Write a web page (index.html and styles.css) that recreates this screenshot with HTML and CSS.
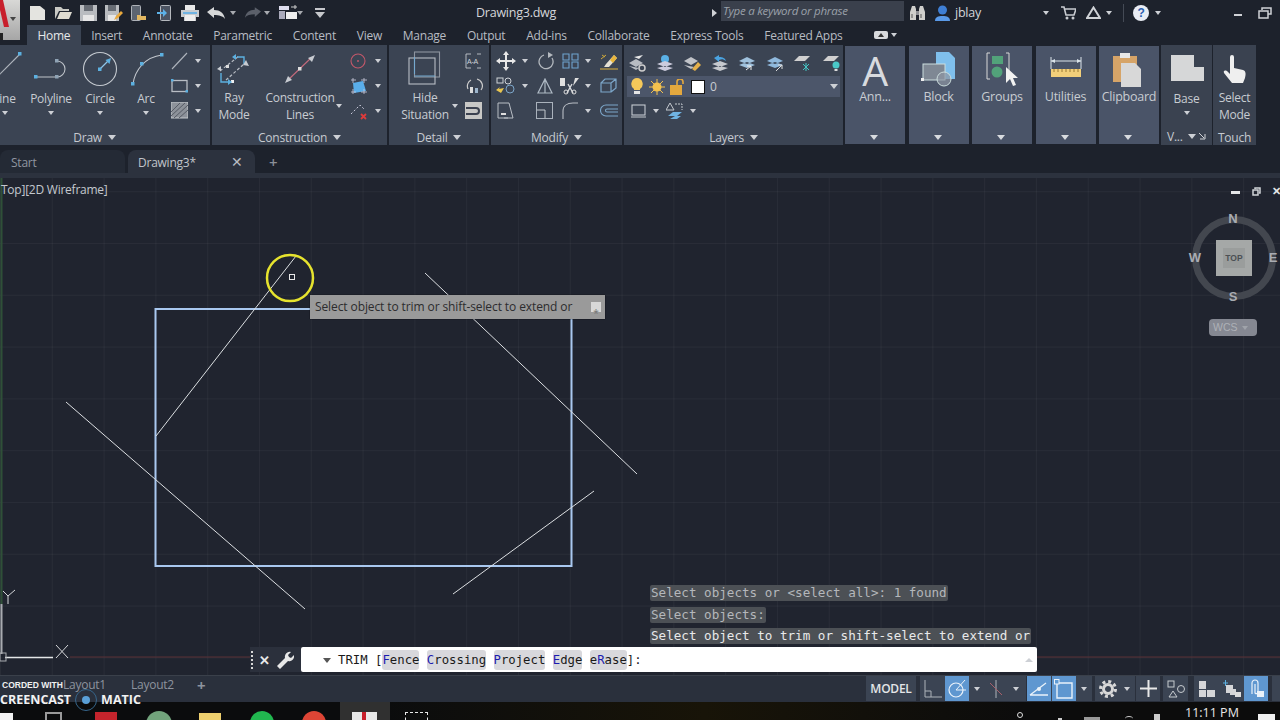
FILE: index.html
```html
<!DOCTYPE html>
<html lang="en">
<head>
<meta charset="utf-8">
<title>Drawing3.dwg</title>
<link rel="stylesheet" href="styles.css">
</head>
<body>
<header class="top">
  <div class="logo">
    <svg width="20" height="40" viewBox="0 0 20 40"><path d="M0 0h3l6 27H4L0 10z" fill="#c8202c"/><path d="M0 33h3v7H0z" fill="#222"/></svg>
    <i class="caret dark"></i>
  </div>
  <div class="top-main">
    <div class="titlebar">
      <div class="qat">
        <svg class="q" width="17" height="14" viewBox="0 0 17 14"><path d="M1 0h10l5 4v10H1z" fill="#e4e4e0"/></svg>
        <svg class="q" width="18" height="14" viewBox="0 0 18 14"><path d="M1 13V1h6l2 2h6v2H5z" fill="#c9c9c4"/><path d="M3 13l3-7h12l-3 7z" fill="#dedbd0"/></svg>
        <svg class="q" width="17" height="16" viewBox="0 0 17 16"><path d="M0 0h17v16H0z" fill="#b9bcc0"/><path d="M4 0h9v6H4z" fill="#676c74"/><path d="M3 10h11v6H3z" fill="#e6e6e6"/></svg>
        <svg class="q" width="18" height="16" viewBox="0 0 18 16"><path d="M0 0h14v16H0z" fill="#b9bcc0"/><path d="M3 0h8v6H3z" fill="#676c74"/><path d="M3 10h8v6H3z" fill="#e6e6e6"/><path d="M9 15l2-4 5-5 2 2-5 5z" fill="#e8a83c"/></svg>
        <svg class="q" width="16" height="16" viewBox="0 0 16 16"><rect x="0.5" y="0.5" width="9" height="15" rx="1" fill="#5c6470" stroke="#aeb2b8"/><path d="M6 10h3l1 1h5v4H6z" fill="#e2b760"/></svg>
        <svg class="q g1" width="14" height="16" viewBox="0 0 14 16"><rect x="3.5" y="0.5" width="10" height="15" rx="1" fill="#4c5462" stroke="#b5b9be"/><path d="M0 7h6V4l4 4-4 4V9H0z" fill="#5db2e8"/></svg>
        <svg class="q" width="18" height="16" viewBox="0 0 18 16"><path d="M4 0h10v5H4z" fill="#e8e8e8"/><path d="M0 5h18v7h-3v4H3v-4H0z" fill="#c8ccd0"/><path d="M4 10h10v6H4z" fill="#eee"/><path d="M2 7h14v2H2z" fill="#6fb3e2"/></svg>
        <svg class="q" width="18" height="12" viewBox="0 0 18 12"><path d="M0 5l7-5v3c6 0 10 3 11 9-2-3-6-4-11-4v3z" fill="#d5d7d8"/></svg>
        <i class="caret qc"></i>
        <svg class="q g2" width="16" height="11" viewBox="0 0 18 12"><path d="M18 5l-7-5v3C5 3 1 6 0 12c2-3 6-4 11-4v3z" fill="#5b606a"/></svg>
        <i class="caret qc"></i>
        <svg class="q g3" width="18" height="15" viewBox="0 0 18 15"><path d="M0 1h10v4H0z" fill="#dde"/><path d="M0 6h6v8H0z" fill="#aab"/><path d="M7 7h11v7H7z" fill="#eee"/><path d="M12 2h6M16 0v4" stroke="#ccc"/></svg>
        <i class="caret qc"></i>
        <svg class="q g4" width="10" height="10" viewBox="0 0 10 10"><path d="M0 0h10v2H0zM0 4h10L5 10z" fill="#c6c8cc"/></svg>
      </div>
      <div class="doc-title">Drawing3.dwg</div>
      <i class="tri-right"></i>
      <div class="search">Type a keyword or phrase</div>
      <svg class="binoc" width="15" height="14" viewBox="0 0 15 14"><path d="M2 0h3l1 3v11H0V6zM10 0h3l2 6v8H9V3z" fill="#cfcfcc"/><path d="M6 5h3v4H6z" fill="#8f9196"/><path d="M2 8v4M11 8v4" stroke="#555"/></svg>
      <svg class="user" width="15" height="16" viewBox="0 0 15 16"><circle cx="7.500" cy="5" r="4.500" fill="#3f7fd4"/><path d="M0 16c0-4 3-5 7.500-5s7.500 1 7.500 5z" fill="#5a9ae8"/></svg>
      <div class="uname">jblay</div>
      <i class="caret u1"></i>
      <svg class="cart" width="15" height="14" viewBox="0 0 15 14"><path d="M0 1h3l2 8h8l2-6H4" fill="none" stroke="#c8cbd0" stroke-width="1.600"/><circle cx="6" cy="12" r="1.500" fill="#c8cbd0"/><circle cx="12" cy="12" r="1.500" fill="#c8cbd0"/></svg>
      <svg class="delta" width="15" height="13" viewBox="0 0 15 13"><path d="M7.500 1.500L14 12H1z" fill="none" stroke="#cfd2d6" stroke-width="2"/></svg>
      <i class="caret u2"></i>
      <span class="vsep"></span>
      <div class="help">?</div>
      <i class="caret u3"></i>
      <span class="win-min"></span>
      <svg class="win-max" width="14" height="12" viewBox="0 0 14 12"><path d="M4 3V1h9v6h-3M1 4h9v7H1z" fill="none" stroke="#cfd2d6" stroke-width="1.500"/></svg>
    </div>
    <nav class="tabs">
      <span class="tab active">Home</span><span class="tab">Insert</span><span class="tab">Annotate</span><span class="tab">Parametric</span><span class="tab">Content</span><span class="tab">View</span><span class="tab">Manage</span><span class="tab">Output</span><span class="tab">Add-ins</span><span class="tab">Collaborate</span><span class="tab">Express Tools</span><span class="tab">Featured Apps</span>
      <span class="tab-pill"><i class="caret up"></i></span><i class="caret pillc"></i>
    </nav>
  </div>
</header>

<section class="ribbon">
  <div class="panel p-draw">
    <div class="body">
      <div class="tool w48"><svg width="48" height="44" viewBox="0 0 48 44"><path d="M16 34L41 9" stroke="#aeb4bc" stroke-width="1.100"/><rect x="39" y="7" width="3.500" height="3.500" fill="#5cb0e0"/></svg><span class="lbl line">Line</span><i class="caret line-c"></i></div>
      <div class="tool w48"><svg width="48" height="44" viewBox="0 0 48 44"><path d="M9 32H30A8 8 0 0 0 30 16" fill="none" stroke="#bfc4ca" stroke-width="1.100"/><rect x="7" y="30" width="3.500" height="3.500" fill="#5cb0e0"/><rect x="28" y="14" width="3.500" height="3.500" fill="#8fa3b5"/><rect x="28" y="30" width="3.500" height="3.500" fill="#8fa3b5"/></svg><span class="lbl">Polyline</span><i class="caret"></i></div>
      <div class="tool w50"><svg width="50" height="44" viewBox="0 0 50 44"><circle cx="25" cy="24" r="16.500" fill="none" stroke="#c4c9cf" stroke-width="1.100"/><path d="M25 24l9-9" stroke="#8fc4e8" stroke-width="1.200"/><rect x="23" y="22.500" width="3.500" height="3.500" fill="#5cb0e0"/><path d="M36 13l-1.500 6-4-4z" fill="#5cb0e0"/></svg><span class="lbl">Circle</span><i class="caret"></i></div>
      <div class="tool w42"><svg width="42" height="44" viewBox="0 0 42 44"><path d="M8 39C10 25 20 12 37 10" fill="none" stroke="#c4c9cf" stroke-width="1.100"/><rect x="6" y="37" width="3.500" height="3.500" fill="#5cb0e0"/><rect x="15" y="17" width="3.500" height="3.500" fill="#5cb0e0"/><rect x="35" y="8" width="3.500" height="3.500" fill="#5cb0e0"/></svg><span class="lbl">Arc</span><i class="caret"></i></div>
      <div class="smalls s-draw">
        <div class="srow"><svg width="17" height="18" viewBox="0 0 17 18"><path d="M1 17L16 1" stroke="#aeb4bc" stroke-width="1.100"/></svg><i class="caret"></i></div>
        <div class="srow"><svg width="17" height="14" viewBox="0 0 17 14"><rect x="1" y="1.500" width="15" height="11" fill="none" stroke="#b8bdc4" stroke-width="1.300"/><rect x="0" y="0" width="2.500" height="2.500" fill="#5cb0e0"/><rect x="14.500" y="11" width="2.500" height="2.500" fill="#5cb0e0"/></svg><i class="caret"></i></div>
        <div class="srow"><svg width="17" height="17" viewBox="0 0 17 17"><rect width="17" height="16" fill="#8d929a" stroke="#c4c8cc"/><path d="M0 10L9 1M0 14L14 1M3 16L17 3M8 16l9-8" stroke="#565b65"/></svg><i class="caret"></i></div>
      </div>
    </div>
    <div class="ptitle">Draw <i class="caret big"></i></div>
  </div>

  <div class="panel p-cons">
    <div class="body">
      <div class="tool w44"><svg width="44" height="44" viewBox="0 0 44 44"><path d="M8 26L27 11M14 35L32 19" fill="none" stroke="#b9bec5" stroke-dasharray="3 2" stroke-width="1.200"/><path d="M25 12h7v7M9 28v9h7" fill="none" stroke="#5cb0e0" stroke-width="1.400"/><rect x="19" y="35" width="3" height="3" fill="#eee"/><rect x="14" y="20" width="3" height="3" fill="#ddd"/><path d="M24 9l-4 3 4 3zM16 34l4 3-4 3z" fill="#5cb0e0"/><path d="M5 24l4-3v5zM34 15l3 6-6-1z" fill="#c8ccd2"/></svg><span class="lbl two">Ray<br>Mode</span></div>
      <div class="tool w74"><svg width="74" height="44" viewBox="0 0 74 44"><path d="M25 35L48 13" stroke="#c36a7c" stroke-width="1.100"/><rect x="35" y="22" width="3.500" height="3.500" fill="#ddd"/><path d="M52 10l-3 7-4-4zM22 38l3-7 4 4z" fill="#c8ccd2"/></svg><span class="lbl two">Construction<br>Lines</span></div>
      <i class="caret c-lines"></i>
      <div class="smalls s-cons">
        <div class="srow"><svg width="18" height="18" viewBox="0 0 18 18"><circle cx="8" cy="9" r="7" fill="none" stroke="#c2586a" stroke-width="1.100"/><circle cx="8" cy="9" r="1" fill="#c2586a"/></svg><i class="caret"></i></div>
        <div class="srow"><svg width="18" height="18" viewBox="0 0 18 18"><path d="M3 6l10-2 3 10-12 2z" fill="#5aaeea"/><path d="M1 3h5M3 1v5M11 3h6M14 1v5M1 15h5M3 12v5M11 15h6M14 12v5" stroke="#ccd" stroke-width=".8"/></svg><i class="caret"></i></div>
        <div class="srow"><svg width="18" height="18" viewBox="0 0 18 18"><path d="M1 12L10 3l5 5" fill="none" stroke="#ccd" stroke-dasharray="2 2"/><path d="M11 12l5 5M16 12l-5 5" stroke="#dd3b3b" stroke-width="1.800"/></svg><i class="caret"></i></div>
      </div>
    </div>
    <div class="ptitle">Construction <i class="caret big"></i></div>
  </div>

  <div class="panel p-detail">
    <div class="body">
      <div class="tool w60"><svg width="36" height="44" viewBox="0 0 36 44"><rect x="7.500" y="7" width="25" height="25" fill="none" stroke="#8e959f" stroke-width="1.100"/><rect x="2" y="13" width="26" height="26" fill="none" stroke="#b9bec5" stroke-width="1.100"/><path d="M7.500 30V13M7.500 32H28" stroke="#75a9cf" stroke-width="1.100" transform="translate(0 -1)"/></svg><span class="lbl two">Hide<br>Situation</span></div>
      <i class="caret c-hide"></i>
      <div class="smalls s-detail">
        <div class="srow"><svg width="18" height="18" viewBox="0 0 18 18"><path d="M1 2h5M1 2v14h5M12 2h4M12 16h4" fill="none" stroke="#c2c6cc" stroke-width=".9"/><text class="ic-t" x="2" y="12">A-A</text></svg></div>
        <div class="srow"><svg width="18" height="18" viewBox="0 0 18 18"><path d="M3 12a7 7 0 0 1 3-9M12 2a7 7 0 0 1 4 11" fill="none" stroke="#ccc" stroke-width="1.200"/><rect x="5" y="10" width="3" height="6" fill="#ddd"/><rect x="10" y="11" width="3" height="5" fill="#9db5cc"/></svg></div>
        <div class="srow"><svg width="18" height="17" viewBox="0 0 18 17"><rect width="17" height="17" fill="#c8c8c6"/><path d="M1 6h10a3 3 0 0 1 0 6H1" fill="none" stroke="#3c4250" stroke-width="2"/></svg></div>
      </div>
    </div>
    <div class="ptitle">Detail <i class="caret big"></i></div>
  </div>

  <div class="panel p-modify">
    <div class="body">
      <div class="mgrid">
        <svg width="20" height="20" viewBox="0 0 20 20"><path d="M10 0l3 4h-2v5h5V7l4 3-4 3v-2h-5v5h2l-3 4-3-4h2v-5H4v2l-4-3 4-3v2h5V4H7z" fill="#e8e8e8"/></svg><i class="caret"></i>
        <svg width="18" height="18" viewBox="0 0 18 18"><path d="M8 3a7 7 0 1 0 8 3" fill="none" stroke="#b4b9bf" stroke-width="1.300"/><path d="M8 0l5 3-5 3z" fill="#b4b9bf" transform="translate(4 0)"/></svg>
        <svg width="17" height="16" viewBox="0 0 17 16"><path d="M1 1h6v6H1zM10 1h6v6h-6zM1 9h6v6H1zM10 9h6v6h-6z" fill="none" stroke="#6fa3cf" stroke-width="1.100"/></svg><i class="caret"></i>
        <svg width="18" height="18" viewBox="0 0 18 18"><path d="M0 17h18" stroke="#e0b13d"/><path d="M6 12l8-9 3 3-8 9H4z" fill="#e4e0d4"/><path d="M10 8l4-5 3 3-4 5z" fill="#e8b53b"/><path d="M1 7l5-4M2 3l3 2" stroke="#d0a93a"/></svg>
        <svg width="20" height="17" viewBox="0 0 20 17"><rect x="1" y="1" width="6" height="5" fill="none" stroke="#cfd3d8"/><circle cx="12" cy="4" r="3" fill="none" stroke="#cfd3d8"/><path d="M0 13l4-3-1 2 5-1-3 5z" fill="#e8c550"/><circle cx="14" cy="12" r="4" fill="none" stroke="#7ca6c9"/></svg><i class="caret"></i>
        <svg width="16" height="16" viewBox="0 0 16 16"><path d="M8 1L1 15h14zM8 1v14" fill="none" stroke="#aeb9c4" stroke-width="1.200"/></svg>
        <svg width="20" height="18" viewBox="0 0 20 18"><path d="M0 1h5v8H0zM15 1h4L13 9z" fill="#e0e0e0"/><path d="M8 7l5 9M12 7l-5 9" stroke="#d8dadd" stroke-width="1.400"/><circle cx="6" cy="15" r="2" fill="none" stroke="#ddd"/><circle cx="14" cy="15" r="2" fill="none" stroke="#ddd"/></svg><i class="caret"></i>
        <svg width="17" height="15" viewBox="0 0 17 15"><path d="M1 5h10v9H1zM1 5l4-4h11v9l-5 4M11 5l5-4" fill="none" stroke="#7ca6c9" stroke-width="1.200"/></svg>
        <svg width="17" height="17" viewBox="0 0 17 17"><path d="M1 1h11l4 15H7M1 1v15h10" fill="none" stroke="#b9bec5"/><path d="M4 11h5v2H4z" fill="#ddd"/></svg><span></span>
        <svg width="17" height="17" viewBox="0 0 17 17"><rect x="0.500" y="0.500" width="16" height="16" fill="none" stroke="#aab2bc" stroke-width="1"/><path d="M1 8h8v8" fill="none" stroke="#c4c9cf"/></svg>
        <svg width="17" height="17" viewBox="0 0 17 17"><path d="M1 17V9C1 4 5 1 11 1h5" fill="none" stroke="#b9bec5" stroke-width="1.100"/></svg><i class="caret"></i>
        <svg width="18" height="13" viewBox="0 0 18 13"><path d="M18 1H6a5 5 0 0 0 0 11h12M18 5H7a1.500 1.500 0 0 0 0 3h11" fill="none" stroke="#7ca6c9" stroke-width="1.100"/></svg>
      </div>
    </div>
    <div class="ptitle">Modify <i class="caret big"></i></div>
  </div>

  <div class="panel p-layers">
    <div class="body col">
      <div class="lrow icons8">
        <svg width="17" height="17" viewBox="0 0 17 17"><path d="M0 8l7-4 7 4-7 4zM0 11l7 4 3-2" fill="#b8bcc2"/><path d="M5 2l9-2-4 4z" fill="#e8e8e8"/><circle cx="13" cy="13" r="3" fill="none" stroke="#ccc" stroke-width="1.500"/></svg>
        <svg width="17" height="17" viewBox="0 0 17 17"><circle cx="8" cy="4" r="4" fill="#5ab1e6"/><path d="M0 9l8-3 8 3-8 3zM0 13l8 3 8-3-8-2z" fill="#ccd"/></svg>
        <svg width="17" height="17" viewBox="0 0 17 17"><path d="M0 6l7-4 7 4-7 4zM0 10l7 4 3-2" fill="#c0c3c8"/><path d="M8 14l6-7 3 3-6 6z" fill="#e4b04b"/></svg>
        <svg width="17" height="17" viewBox="0 0 17 17"><path d="M0 9l8-3 8 3-8 3zM0 13l8 3 8-3-8-2z" fill="#c6c9ce"/><path d="M2 3l5-3v2c4 0 6 1 7 4-3-2-4-2-7-1v2z" fill="#4aa3e0"/></svg>
        <svg width="17" height="17" viewBox="0 0 17 17"><path d="M0 6l8-4 8 4-8 3zM0 10l8 3 8-3-8-3z" fill="#9fc1dd"/><path d="M7 15l5-4M12 15v-4H8" stroke="#eee" fill="none"/></svg>
        <svg width="17" height="17" viewBox="0 0 17 17"><path d="M0 6l8-4 8 4-8 3zM0 10l8 3 8-3-8-3z" fill="#8fb9dd"/><path d="M9 16l6-6M15 14v-4h-4" stroke="#ddd" fill="none"/></svg>
        <svg width="18" height="17" viewBox="0 0 18 17"><path d="M0 6l5-5h11l-5 5z" fill="#d0d0d0"/><path d="M9 9l6 6M15 9l-6 6M12 8v8" stroke="#45c5c5"/></svg>
        <svg width="18" height="17" viewBox="0 0 18 17"><path d="M0 6l5-5h11l-5 5z" fill="#d0d0d0"/><circle cx="13" cy="10" r="3.500" fill="#4ac8c8"/><rect x="11.500" y="14" width="3" height="2" fill="#ddd"/></svg>
      </div>
      <div class="combo">
        <svg class="bulb" width="12" height="17" viewBox="0 0 12 17"><path d="M6 0a6 6 0 0 1 3 11v1H3v-1A6 6 0 0 1 6 0z" fill="#f5c85a"/><path d="M3 13h6v3H3z" fill="#e4e4e4"/></svg>
        <svg class="sun" width="16" height="16" viewBox="0 0 16 16"><circle cx="8" cy="8" r="4.500" fill="#f3c14f"/><path d="M8 0v16M0 8h16M2 2l12 12M14 2L2 14" stroke="#f3c14f"/></svg>
        <svg class="lock" width="15" height="16" viewBox="0 0 15 16"><rect y="6" width="12" height="10" fill="#e3a83e"/><path d="M7 6V3a3 3 0 0 1 6 0v2" fill="none" stroke="#e3a83e" stroke-width="1.600"/></svg>
        <span class="swatch"></span>
        <span class="zero">0</span>
        <i class="caret big combo-c"></i>
      </div>
      <div class="lrow row3">
        <svg width="15" height="14" viewBox="0 0 15 14"><rect x="1" y="1" width="13" height="10" fill="none" stroke="#c4c9cf" stroke-width="1.100"/><path d="M0 13h15" stroke="#c4c9cf"/></svg><i class="caret"></i>
        <svg class="match" width="17" height="17" viewBox="0 0 17 17"><path d="M4 1L0 8h8z" fill="none" stroke="#c4c9cf"/><path d="M9 2h7v6" fill="none" stroke="#c4c9cf" stroke-dasharray="2 1"/><path d="M2 14l5-4h9l-5 4zM4 17l5-3h6l-4 3z" fill="#6fb3e2"/></svg><i class="caret"></i>
      </div>
    </div>
    <div class="ptitle">Layers <i class="caret big"></i></div>
  </div>

  <div class="collapsed c-ann">
    <span class="big-a">A</span>
    <span class="lbl">Ann...</span>
    <i class="caret big"></i>
  </div>
  <div class="collapsed">
    <svg width="36" height="36" viewBox="0 0 36 36"><path d="M15 0h13l6 6v21H15z" fill="#7fbfec"/><rect x="2" y="12" width="22" height="16" fill="#7f8894" stroke="#cdd" /><circle cx="23" cy="27" r="7" fill="#8d96a3" fill-opacity=".7" stroke="#cdd"/><rect x="0" y="26" width="3" height="3" fill="#eee"/></svg>
    <span class="lbl">Block</span>
    <i class="caret big"></i>
  </div>
  <div class="collapsed">
    <svg width="36" height="36" viewBox="0 0 36 36"><path d="M6 1H3v26h3M22 1h3v26h-3" fill="none" stroke="#d8d8d8"/><rect x="8" y="4" width="11" height="8" fill="#52a27a"/><circle cx="13" cy="20" r="5.500" fill="#52a27a"/><path d="M22 15l0 16 4-4 3 7 3-1-3-7h5z" fill="#f2f2f2"/></svg>
    <span class="lbl">Groups</span>
    <i class="caret big"></i>
  </div>
  <div class="collapsed">
    <svg width="36" height="36" viewBox="0 0 36 36"><path d="M3 9h30M3 5v12M33 5v12" stroke="#dbe4ea" fill="none"/><path d="M3 9l4-2v4zM33 9l-4-2v4z" fill="#dbe4ea"/><rect x="3" y="17" width="30" height="8" fill="#f2cf7a"/><path d="M6 17v3M10 17v3M14 17v3M18 17v3M22 17v3M26 17v3M30 17v3" stroke="#9a7a35"/></svg>
    <span class="lbl">Utilities</span>
    <i class="caret big"></i>
  </div>
  <div class="collapsed">
    <svg width="36" height="36" viewBox="0 0 36 36"><rect x="2" y="4" width="24" height="26" fill="#d6a468"/><rect x="9" y="1" width="10" height="5" fill="#e8e8e8"/><path d="M10 11h14l6 6v18H10z" fill="#d8d8d8"/></svg>
    <span class="lbl">Clipboard</span>
    <i class="caret big"></i>
  </div>
  <div class="panel p-base">
    <div class="body">
      <div class="tool grow"><svg width="36" height="44" viewBox="0 0 36 44"><path d="M2 10h23v12h10v14H2z" fill="#d6d7d8"/></svg><span class="lbl">Base</span><i class="caret"></i></div>
    </div>
    <div class="ptitle v-title"><span>V...</span><i class="caret big"></i><svg width="7" height="7" viewBox="0 0 7 7"><path d="M0 0l5 5M6 1v5H1" fill="none" stroke="#d2d4d8"/></svg></div>
  </div>
  <div class="panel p-touch">
    <div class="body">
      <div class="tool grow"><svg width="28" height="44" viewBox="0 0 28 44"><path d="M9 12a2 2 0 0 1 4 0v11l9 2c3 1 3 4 2 8l-2 5H11L3 28c-1-3 2-3 4-1l2 2z" fill="#efefef"/></svg><span class="lbl two">Select<br>Mode</span></div>
    </div>
    <div class="ptitle">Touch</div>
  </div>
</section>

<div class="filetabs">
  <div class="ftab start">Start</div>
  <div class="ftab current"><span>Drawing3*</span><span class="fx">✕</span></div>
  <div class="fplus">+</div>
</div>
<div class="strip"></div>

<main class="viewport">
  <svg class="drawing" width="1280" height="497" viewBox="0 178 1280 497">
    <path d="M70 657H1280" stroke="#5a3036" stroke-width="1"/>
    <path d="M1.500 178V604" stroke="#2f5038" stroke-width="2"/>
    <path d="M1.500 604V654" stroke="#a8abb0" stroke-width="2"/>
    <path d="M5 657.500H53" stroke="#e4e6e8" stroke-width="1.500"/>
    <rect x="0" y="653" width="6" height="8" fill="none" stroke="#a8abb0"/>
    <path d="M56 645l12 13M68 645L56 658M3 591l5 5 7-6M8 596v8" fill="none" stroke="#d5d7da" stroke-width="1"/>
    <rect x="155.500" y="309" width="416" height="257" fill="none" stroke="#a9c8f0" stroke-width="2"/>
    <path d="M296 256L156 436M425 273L637 474M66 402L305 609M594 491L453 594" fill="none" stroke="#dcdfe2" stroke-width="1"/>
    <circle cx="290" cy="278" r="23" fill="none" stroke="#e6e32e" stroke-width="2.500"/>
    <rect x="289.500" y="274.500" width="5" height="5" fill="#212530" stroke="#e8e8e8"/>
  </svg>
  <div class="vp-label">Top][2D Wireframe]</div>
  <div class="vp-ctl"><span class="c-min"></span><svg class="c-rest" width="9" height="9" viewBox="0 0 9 9"><path d="M3 2V1h5v5H7M1 3h5v5H1z" fill="none" stroke="#d0d3d7" stroke-width="1.500"/></svg><span class="c-x">✕</span></div>

  <div class="tooltip"><span>Select object to trim or shift-select to extend or</span><span class="tip-ic">⁎</span></div>

  <div class="compass">
    <span class="ring"></span>
    <span class="dir n">N</span><span class="dir s">S</span><span class="dir w">W</span><span class="dir e">E</span>
    <span class="cube"><b>TOP</b></span>
  </div>
  <div class="wcs">WCS <i class="caret"></i></div>

  <div class="history">
    <span class="hline dim">Select objects or &lt;select all&gt;: 1 found</span>
    <span class="hline dim">Select objects:</span>
    <span class="hline bright">Select object to trim or shift-select to extend or</span>
  </div>
  <div class="cmdwrap">
    <div class="cmd-handle"><span class="grip"></span><span class="cmd-x">✕</span>
      <svg width="18" height="18" viewBox="0 0 18 18"><path d="M1 15l8-8a5 5 0 0 1 6-6l-3 3 1 2 2 1 3-3a5 5 0 0 1-6 6l-8 8z" fill="#e8e8e8"/></svg>
    </div>
    <div class="cmdline">
      <i class="caret cmd-c"></i>
      <span class="cmd-text">TRIM [<span class="opt"><b>F</b>ence</span> <span class="opt"><b>C</b>rossing</span> <span class="opt"><b>P</b>roject</span> <span class="opt"><b>E</b>dge</span> <span class="opt">e<b>R</b>ase</span>]:</span>
      <i class="caret up cmd-up"></i>
    </div>
  </div>
</main>

<footer class="statusbar">
  <div class="ltabs"><span class="ltab">Layout1</span><span class="ltab">Layout2</span><span class="lplus">+</span></div>
  <div class="sb">
    <span class="sb-model">MODEL</span>
    <div class="sbgroup g-a">
      <span class="btn"><svg width="18" height="18" viewBox="0 0 18 18"><path d="M1 0v17h17M1 11h6v6" fill="none" stroke="#aeb3ba"/></svg></span>
      <span class="btn on"><svg width="19" height="19" viewBox="0 0 19 19"><circle cx="8" cy="11" r="7" fill="none" stroke="#eaf2fa" stroke-width="1.200"/><path d="M8 11h10M8 11l9-10" stroke="#eaf2fa"/></svg></span>
      <span class="cbtn"><i class="caret"></i></span>
      <span class="btn w-iso"><svg width="14" height="18" viewBox="0 0 14 18"><path d="M7 0v18" stroke="#aeb3ba"/><path d="M1 3l12 12" stroke="#a8606a"/></svg></span>
      <span class="cbtn w-c"><i class="caret"></i></span>
    </div>
    <div class="sbgroup g-b">
      <span class="btn on"><svg width="20" height="18" viewBox="0 0 20 18"><path d="M1 15h18M1 15L17 3" stroke="#eaf2fa" fill="none" stroke-width="1.300"/><circle cx="10" cy="9" r="2" fill="#eaf2fa"/></svg></span>
      <span class="btn on"><svg width="20" height="20" viewBox="0 0 20 20"><path d="M3 5v14h15V4H5" fill="none" stroke="#eaf2fa" stroke-width="1.400"/><rect x="0.500" y="0.500" width="4.500" height="4.500" fill="#5f9bd5" stroke="#eaf2fa"/></svg></span>
      <span class="cbtn"><i class="caret"></i></span>
    </div>
    <div class="sbgroup g-c">
      <svg class="gear" width="18" height="18" viewBox="0 0 18 18"><circle cx="9" cy="9" r="4.500" fill="none" stroke="#d8d8d8" stroke-width="3"/><circle cx="9" cy="9" r="7.500" fill="none" stroke="#d8d8d8" stroke-width="3" stroke-dasharray="3 2.890"/></svg>
      <span class="cbtn"><i class="caret"></i></span>
    </div>
    <div class="sbgroup g-d"><svg width="17" height="17" viewBox="0 0 17 17"><path d="M8.500 0v17M0 8.500h17" stroke="#e8e8e8" stroke-width="2"/></svg></div>
    <div class="sbgroup g-e"><svg width="18" height="18" viewBox="0 0 18 18"><rect x="1" y="1" width="6" height="6" fill="none" stroke="#c8ccd0"/><circle cx="14" cy="9" r="3.500" fill="none" stroke="#c8ccd0"/><path d="M6 11l-4 6h8z" fill="none" stroke="#c8ccd0"/></svg></div>
    <div class="sbgroup g-f">
      <span class="btn wide"><svg width="16" height="16" viewBox="0 0 16 16"><path d="M0 0h7v8H0zM0 9h7v7H0zM8 9h8v7H8z" fill="#d5d6d8"/></svg></span>
      <span class="btn wide"><svg width="18" height="18" viewBox="0 0 18 18"><path d="M3 5h7v8H3zM7 9h6v6H7z" fill="#d5d6d8"/><path d="M0 3h5M2.500 0v6" stroke="#5cb0e0"/><rect x="12" y="12" width="6" height="5" fill="#ddd"/></svg></span>
      <span class="btn on"><svg width="18" height="19" viewBox="0 0 18 19"><path d="M5 15V4a3 3 0 0 1 6 0v10a2 2 0 0 1-3 0V5" fill="none" stroke="#eaf2fa" stroke-width="1.200"/><rect x="10" y="12" width="7" height="6" fill="#eaf2fa"/></svg></span>
    </div>
    <span class="sb-end"></span>
  </div>
</footer>

<div class="taskbar">
  <span class="tk win"></span>
  <span class="tk tv"></span>
  <span class="tk red"></span>
  <span class="tk grn"></span>
  <span class="tk fld"></span>
  <span class="tk spot"></span>
  <span class="tk chr"></span>
  <span class="tk acad"><span class="acad-box"></span></span>
  <span class="tk snip"></span>
  <span class="tk sys"></span>
  <span class="tk sys2"></span>
  <span class="tk sys3"></span>
  <span class="tk sys4"></span>
  <span class="tk sys5"></span>
  <span class="clock">11:11 PM</span>
  <span class="notif"></span>
</div>

<div class="rec-top">CORDED WITH</div>
<div class="rec-brand"><span>CREENCAST</span><span class="rec-o"><i></i></span><span>MATIC</span></div>
</body>
</html>
```
FILE: styles.css
```css
* { box-sizing: border-box; }
html, body { margin: 0; padding: 0; }
body {
  position: relative;
  width: 1280px;
  height: 720px;
  overflow: hidden;
  background: #1d222c;
  color: #d0d3d8;
  font-family: "Open Sans", "Noto Sans", sans-serif;
  font-size: 12px;
  letter-spacing: -.24px;
}
svg { display: block; flex: none; }

.caret {
  display: inline-block;
  flex: none;
  width: 0;
  height: 0;
  border-left: 3.5px solid transparent;
  border-right: 3.5px solid transparent;
  border-top: 4px solid #cdd0d5;
}
.caret.big { border-left-width: 4.5px; border-right-width: 4.5px; border-top-width: 5px; vertical-align: 2px; margin-left: 3px; }
.caret.up { border-top: 0; border-bottom: 4px solid #cdd0d5; }

/* top */
.top { display: flex; height: 45px; }
.logo {
  position: relative;
  width: 20px;
  height: 40px;
  background: linear-gradient(180deg, #d8d8d6, #a6a6a6);
  overflow: hidden;
}
.logo .caret.dark { position: absolute; left: 10px; top: 17px; border-top-color: #444; }
.top-main { flex: 1; display: flex; flex-direction: column; }
.titlebar { height: 25px; display: flex; align-items: center; position: relative; }
.qat { display: flex; align-items: center; width: 456px; padding-left: 9px; flex: none; }
.q { margin-right: 8px; }
.q.g1 { margin-left: 2px; margin-right: 10px; }
.q.g2 { margin-left: 9px; margin-right: 6px; }
.q.g3 { margin-left: 9px; margin-right: 3px; }
.q.g4 { margin-left: 12px; }
.caret.qc { margin-left: -3px; border-top-color: #a8abb0; }
.doc-title { width: 236px; font-size: 12.5px; color: #d4d6da; }
.tri-right { width: 0; height: 0; border-top: 4px solid transparent; border-bottom: 4px solid transparent; border-left: 5px solid #d0d2d6; margin-right: 4px; }
.search { width: 183px; height: 20px; background: #3a404c; font-style: italic; color: #9ba1aa; font-size: 11.5px; line-height: 20px; padding-left: 2px; margin-top: -3px; }
.binoc { margin-left: 6px; }
.user { margin-left: 10px; }
.uname { margin-left: 5px; width: 88px; font-size: 12.5px; color: #d4d6da; }
.caret.u1 { margin-right: 12px; }
.delta { margin-left: 10px; }
.caret.u2 { margin-left: 5px; }
.vsep { width: 1px; height: 18px; background: #444a55; margin-left: 11px; }
.help { width: 16px; height: 16px; border-radius: 50%; background: #e8ecf4; color: #2a5fb0; font: bold 12px/16px "Liberation Sans", sans-serif; text-align: center; margin-left: 9px; }
.caret.u3 { margin-left: 6px; }
.win-min { width: 8px; height: 2px; background: #cfd2d6; margin-left: 73px; margin-top: 5px; }
.win-max { margin-left: 16px; }
.tabs { height: 20px; display: flex; align-items: center; padding-left: 7px; }
.tab { padding: 0 10.4px; height: 20px; line-height: 21px; font-size: 12px; color: #b8bcc3; white-space: nowrap; }
.tab.active { background: #3b4453; color: #e6e8ea; }
.tab-pill { width: 14px; height: 8px; border-radius: 2px; background: #d8dadd; margin-left: 21px; display: flex; justify-content: center; align-items: center; }
.tab-pill .caret.up { border-bottom-color: #333; border-left-width: 3px; border-right-width: 3px; }
.caret.pillc { margin-left: 3px; }

/* ribbon */
.ribbon { display: flex; height: 100px; }
.panel { display: flex; flex-direction: column; background: #3b4453; height: 100px; margin-right: 2px; flex: none; }
.body { height: 83px; display: flex; }
.body.col { flex-direction: column; }
.ptitle { height: 17px; line-height: 19px; text-align: center; font-size: 12px; color: #c6cad0; white-space: nowrap; }
.tool { display: flex; flex-direction: column; align-items: center; flex: none; position: relative; }
.tool .caret { margin-top: 3px; }
.lbl { font-size: 12px; line-height: 18px; margin-top: 1px; color: #c8ccd2; text-align: center; white-space: nowrap; }
.lbl.two { line-height: 17px; margin-top: 0; }
.lbl.line { padding-left: 3px; }
.caret.line-c { margin-left: 3px; }
.w42 { width: 42px; } .w44 { width: 44px; } .w48 { width: 48px; } .w50 { width: 50px; }
.w60 { width: 60px; margin-left: 6px; }
.w74 { width: 74px; margin-left: 7px; }
.grow { flex: 1; }
.p-draw { width: 231px; margin-left: -21px; }
.p-cons { width: 175px; }
.p-detail { width: 100px; }
.p-modify { width: 131px; }
.p-layers { width: 219px; }
.p-base { width: 51px; background: #3a4250; margin-right: 1px; margin-left: -1.500px; }
.p-touch { width: 43px; background: #3a4250; }
.smalls { display: flex; flex-direction: column; padding-top: 3px; flex: none; }
.srow { height: 25px; display: flex; align-items: center; gap: 7px; }
.s-draw { margin-left: 4px; }
.s-cons { margin-left: 1px; }
.s-detail { margin-left: 7px; }
.ic-t { font-size: 7px; fill: #d0d4da; font-family: "Liberation Sans", sans-serif; }
.caret.c-lines { margin-top: 59px; margin-left: -1px; margin-right: 7px; }
.caret.c-hide { margin-top: 59px; margin-left: -3px; }
.mgrid {
  display: grid;
  grid-template-columns: 27px 12px 27px 24px 12px 29px;
  grid-auto-rows: 25px;
  justify-items: center;
  align-items: center;
  padding: 3px 0 0 1px;
}
.lrow { display: flex; align-items: center; height: 25px; }
.icons8 { padding: 5px 0 0 5px; gap: 10.5px; height: 31px; }
.combo { display: flex; align-items: center; height: 21px; margin-left: 3px; width: 213px; background: #4c566a; padding-left: 4px; position: relative; }
.bulb { margin-right: 6px; }
.sun { margin-right: 5px; }
.lock { margin-right: 6px; }
.swatch { width: 14px; height: 14px; background: #fff; border: 1px solid #111; }
.zero { margin-left: 5px; font-size: 12px; color: #c8ccd2; }
.caret.combo-c { position: absolute; right: 2px; top: 8px; }
.row3 { padding: 2px 0 0 7px; }
.row3 .caret { margin-left: 7px; }
.match { margin-left: 7px; }

.collapsed {
  flex: none;
  width: 60px;
  height: 98px;
  margin: 1px 3.500px 1px 0;
  background: #4a5468;
  display: flex;
  flex-direction: column;
  align-items: center;
  padding-top: 6px;
  position: relative;
}
.collapsed .lbl { margin-top: 0; line-height: 17px; font-size: 12.5px; }
.collapsed .caret.big { position: absolute; bottom: 4px; left: 25px; margin: 0; border-top-color: #d8dbdf; }
.big-a { height: 36px; font: 41px/36px "Open Sans", sans-serif; color: #d8dbdf; }
.v-title { display: flex; align-items: center; justify-content: flex-start; gap: 3px; padding-left: 6px; }
.v-title .caret.big { margin-left: 2px; vertical-align: 0; }

/* file tabs */
.filetabs { margin-top: 5px; height: 23px; display: flex; align-items: stretch; }
.ftab { height: 23px; line-height: 25px; font-size: 12px; color: #9096a0; border-radius: 8px 8px 0 0; }
.ftab.start { width: 125px; padding-left: 11px; background: #242a35; margin-right: 3px; }
.ftab.current { width: 127px; padding-left: 10px; background: #2c323e; color: #c0c4ca; display: flex; justify-content: space-between; padding-right: 12px; }
.fx { font-size: 14px; line-height: 23px; color: #b8bcc2; }
.fplus { margin-left: 14px; font-size: 15px; font-weight: 600; line-height: 25px; color: #8a8f98; }
.strip { height: 5px; background: #2c323e; }

/* viewport */
.viewport {
  position: relative;
  height: 497px;
  background-color: #20242f;
  background-image:
    linear-gradient(to right, rgba(255,255,255,.04) 1px, transparent 1px),
    linear-gradient(to bottom, rgba(255,255,255,.04) 1px, transparent 1px);
  background-size: 51.8px 51.8px;
  background-position: 0 13.2px;
}
.drawing { position: absolute; left: 0; top: 0; }
.vp-label { position: absolute; left: 1px; top: 3px; font-size: 12px; color: #c4c8ce; }
.vp-ctl { position: absolute; right: 0; top: 7px; display: flex; align-items: center; }
.c-min { width: 9px; height: 2.500px; background: #e4e6e8; margin-right: 12px; margin-top: 3px; }
.c-rest { margin-right: 11px; }
.c-x { width: 8px; overflow: hidden; font-size: 11px; font-weight: bold; color: #e4e6e8; line-height: 12px; }

.tooltip {
  position: absolute; left: 310px; top: 117px; width: 295px; height: 24px;
  background: #9a9a9a; color: #2c2c2e; font-size: 12px; line-height: 22px; letter-spacing: -.1px;
  padding: 0 4px 0 5px; display: flex; justify-content: space-between; align-items: center;
  box-shadow: 0 0 1px #000;
}
.tip-ic { width: 10px; height: 10px; background: #d8d8d8; color: #777; font-size: 10px; line-height: 12px; text-align: center; }

.compass { position: absolute; left: 1192px; top: 38px; width: 84px; height: 84px; }
.ring { position: absolute; inset: 0; border: 7px solid #43474f; border-radius: 50%; }
.dir { position: absolute; font: bold 13px/14px "Liberation Sans", sans-serif; color: #a9acb2; width: 14px; text-align: center; letter-spacing: 0; }
.dir.n { left: 34px; top: -4px; } .dir.s { left: 34px; top: 74px; }
.dir.w { left: -4px; top: 35px; } .dir.e { left: 74px; top: 35px; }
.cube { position: absolute; left: 24px; top: 24px; width: 36px; height: 36px; background: #a5a8a7; display: flex; align-items: center; justify-content: center; }
.cube b { font: bold 8.500px "Liberation Sans", sans-serif; color: #4c5054; background: #9a9d9c; padding: 5px 2px; letter-spacing: 0; }
.wcs { position: absolute; left: 1209px; top: 141px; width: 48px; height: 17px; background: #858892; border-radius: 4px; color: #aeb1b7; font: 10.500px/17px "Liberation Sans", sans-serif; padding-left: 4px; display: flex; align-items: center; gap: 4px; letter-spacing: 0; }
.wcs .caret { border-top-color: #a0a3aa; }

.history { position: absolute; left: 650px; top: 407px; display: flex; flex-direction: column; align-items: flex-start; gap: 5.500px; font: 12.600px/16px "DejaVu Sans Mono", monospace; letter-spacing: 0; }
.hline { background: #4c5055; padding: 0 1px; white-space: pre; border-radius: 2px; }
.hline.dim { color: #b4b7bb; }
.hline.bright { color: #e8e9ea; }

.cmdwrap { position: absolute; left: 250px; top: 469px; display: flex; height: 25px; }
.cmd-handle { width: 51px; background: #2b303c; display: flex; align-items: center; gap: 6px; padding-left: 1px; }
.grip { width: 2px; height: 18px; border-left: 2px dotted #d8d8d8; }
.cmd-x { font-size: 13px; font-weight: bold; color: #e8e8e8; }
.cmdline { width: 736px; background: #fff; border-radius: 2px; display: flex; align-items: center; padding: 1px 0 0 22px; position: relative; }
.cmd-c { border-top-color: #555; border-left-width: 4px; border-right-width: 4px; border-top-width: 5px; margin-right: 7px; }
.cmd-text { font: 12.300px/16px "DejaVu Sans Mono", monospace; color: #1a1a1a; white-space: pre; letter-spacing: 0; }
.opt { background: #d8d8dc; border-radius: 3px; padding: 3px 0; }
.opt b { font-weight: normal; color: #1c1cb0; }
.cmd-up { position: absolute; right: 4px; top: 11px; border-bottom-color: #555; border-left-width: 4px; border-right-width: 4px; }

/* status bar */
.statusbar { height: 27px; background: #2a303c; border-top: 1px solid #3a404a; display: flex; position: relative; }
.ltabs { display: flex; align-items: center; padding-left: 63px; width: 866px; flex: none; height: 17px; }
.ltab { font-size: 12px; color: #8d939e; margin-right: 25px; }
.lplus { font-size: 15px; font-weight: bold; color: #8d939e; margin-left: -2px; }
.sb { display: flex; height: 25px; }
.sb-model { width: 50px; background: #3b4453; color: #e4e6e8; font-size: 12px; font-weight: 600; text-align: center; line-height: 25px; }
.sbgroup { display: flex; align-items: center; background: #3b4453; height: 25px; margin-left: 4px; }
.btn { width: 25px; height: 25px; display: flex; align-items: center; justify-content: center; }
.btn.on { width: 24px; background: #5f97d0; }
.cbtn { width: 16px; height: 25px; display: flex; align-items: center; justify-content: center; }
.btn.w-iso { width: 22px; } .cbtn.w-c { width: 18px; }
.g-a { width: 106px; margin-left: 4px; }
.g-b { width: 65px; margin-left: 1px; }
.g-b .btn + .btn { margin-left: 1px; }
.g-c { margin-left: 3px; width: 40px; padding-left: 2px; }
.gear { margin: 0 2px; }
.g-d { width: 24px; margin-left: 1px; justify-content: center; }
.g-e { width: 25px; margin-left: 3px; justify-content: center; }
.g-f { width: 74px; margin-left: 6px; }
.btn.wide { width: 25px; }
.sb-end { width: 8px; background: #3b4453; margin-left: 4px; }

.rec-top { position: absolute; left: 2px; top: 679px; font: bold 8.500px/12px "Liberation Sans", sans-serif; color: #f0f0f0; letter-spacing: 0; }
.rec-brand { position: absolute; left: 0; top: 689px; display: flex; align-items: center; font: bold 12.500px/22px "Open Sans", sans-serif; color: #f2f2f2; letter-spacing: 0; }
.rec-o { width: 22px; height: 22px; border: 1.500px solid #36658a; border-radius: 50%; margin: 0 4px 0 4px; display: flex; align-items: center; justify-content: center; }
.rec-o i { width: 8px; height: 8px; background: #5aa0d8; border-radius: 50%; }

/* taskbar */
.taskbar { height: 18px; background: linear-gradient(90deg, #0b0c0d 30%, #181408 55%, #0c0c0c 80%); position: relative; overflow: hidden; }
.tk { position: absolute; display: block; }
.win { left: 0; top: 11px; width: 13px; height: 12px; background: #f2f2f2; }
.tv { left: 45px; top: 10px; width: 17px; height: 10px; border: 2px solid #9a9a9a; }
.red { left: 95px; top: 10px; width: 22px; height: 14px; background: #c4242c; }
.grn { left: 146px; top: 9px; width: 26px; height: 26px; border-radius: 50%; background: #72a47c; }
.fld { left: 199px; top: 11px; width: 22px; height: 12px; background: #eecf6e; }
.spot { left: 250px; top: 9px; width: 24px; height: 24px; border-radius: 50%; background: #21b84f; }
.chr { left: 302px; top: 9px; width: 24px; height: 24px; border-radius: 50%; background: conic-gradient(#dd4535 0 50%, #e8b92d 50% 75%, #dd4535 75%); }
.acad { left: 340px; top: 0; width: 50px; height: 18px; background: #303030; }
.acad-box { position: absolute; left: 12px; top: 10px; width: 25px; height: 14px; background: linear-gradient(90deg, #e8e8e8 42%, #c8202c 42% 58%, #e8e8e8 58%); }
.snip { left: 405px; top: 10px; width: 23px; height: 14px; border: 1px dashed #e8e8e8; }
.sys { left: 1017px; top: 10px; width: 6px; height: 6px; border: 1.500px solid #ddd; border-radius: 50%; }
.sys2 { left: 1058px; top: 16px; width: 4px; height: 2px; background: #ccc; }
.sys3 { left: 1084px; top: 15px; width: 16px; height: 3px; background: #999; }
.sys4 { left: 1125px; top: 14px; width: 8px; height: 6px; border-top: 1.500px solid #ccc; border-radius: 50%; }
.sys5 { left: 1154px; top: 12px; width: 6px; height: 6px; background: #ccc; }
.clock { position: absolute; left: 1185px; top: 3px; font-size: 12.500px; line-height: 16px; color: #e8e8e8; letter-spacing: 0; }
.notif { position: absolute; left: 1258px; top: 12px; width: 17px; height: 10px; background: #f0f0f0; }
```
